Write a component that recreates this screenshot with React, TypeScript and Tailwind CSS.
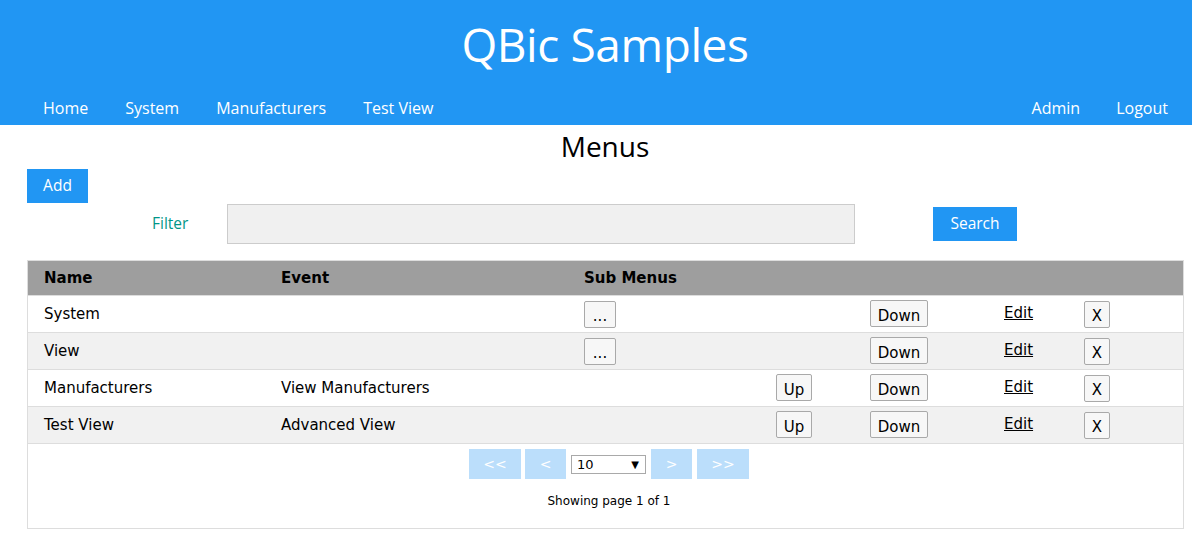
import { ReactNode } from 'react';

const navFont = { fontFamily: '"Open Sans", "Noto Sans", sans-serif' };

type Row = { name: string; event: string; sub: boolean; up: boolean; shade: boolean };

const rows: Row[] = [
  { name: 'System', event: '', sub: true, up: false, shade: false },
  { name: 'View', event: '', sub: true, up: false, shade: true },
  { name: 'Manufacturers', event: 'View Manufacturers', sub: false, up: true, shade: false },
  { name: 'Test View', event: 'Advanced View', sub: false, up: true, shade: true },
];

const cols = 'grid grid-cols-[237px_303px_192px_94px_134px_80px_1fr]';

function SmallButton({ children, className = '' }: { children: ReactNode; className?: string }) {
  return (
    <button
      className={`h-[27px] border border-[#a9a9a9] bg-[#f7f7f7] text-[15px] text-black leading-none rounded-[2px] ${className}`}
    >
      {children}
    </button>
  );
}

function PageButton({ children, className = '' }: { children: ReactNode; className?: string }) {
  return (
    <button className={`h-[30px] bg-[#bbdefb] text-white text-[14px] ${className}`}>{children}</button>
  );
}

export default function App() {
  return (
    <div className="w-[1192px] h-[540px] bg-white overflow-hidden" style={{ fontFamily: '"DejaVu Sans", Verdana, sans-serif' }}>
      <header className="bg-[#2196f3] h-[125px] flex flex-col text-white" style={navFont}>
        <h1 className="text-center text-[46px] leading-none pt-[21px] pl-[18px] h-[91px] font-normal tracking-[-0.4px]">QBic Samples</h1>
        <nav className="flex items-center pl-[25px] pr-[6px] text-[16px] h-[34px]">
          {['Home', 'System', 'Manufacturers', 'Test View'].map((item) => (
            <a key={item} className="px-[18px] mr-px">{item}</a>
          ))}
          <div className="flex-1" />
          {['Admin', 'Logout'].map((item) => (
            <a key={item} className="px-[18px]">{item}</a>
          ))}
        </nav>
      </header>

      <h2 className="text-center text-[28px] leading-none pt-[7px] pl-[18px] h-[44px] text-black" style={navFont}>Menus</h2>

      <div className="px-[27px]">
        <button className="bg-[#2196f3] text-white w-[61px] h-[34px] text-[15.5px]" style={navFont}>Add</button>
      </div>

      <div className="flex items-center h-[40px] mt-px" style={navFont}>
        <span className="w-[227px] pl-[152px] text-[#009688] text-[15.5px]">Filter</span>
        <input className="w-[628px] h-[40px] bg-[#f0f0f0] border border-[#cccccc] outline-none" />
        <button className="ml-[78px] bg-[#2196f3] text-white w-[84px] h-[34px] text-[15.5px]">Search</button>
      </div>

      <div className="mx-[27px] mt-[16px] border border-[#dddddd] w-[1157px] h-[269px]">
        <div className={`${cols} bg-[#9e9e9e] h-[35px] items-center font-bold text-[15px] text-black border-b border-[#dddddd] pt-px`}>
          <div className="pl-[16px]">Name</div>
          <div className="pl-[16px]">Event</div>
          <div className="pl-[16px]">Sub Menus</div>
        </div>
        {rows.map((r) => (
          <div
            key={r.name}
            className={`${cols} h-[37px] items-center text-[15px] text-black border-b border-[#dddddd] ${r.shade ? 'bg-[#f1f1f1]' : 'bg-white'}`}
          >
            <div className="pl-[16px]">{r.name}</div>
            <div className="pl-[16px]">{r.event}</div>
            <div className="pl-[16px]">{r.sub && <SmallButton className="w-[32px] text-[13px] pt-[4px]">...</SmallButton>}</div>
            <div className="pl-[16px]">{r.up && <SmallButton className="w-[36px] pt-[6px]">Up</SmallButton>}</div>
            <div className="pl-[16px]"><SmallButton className="w-[58px] pt-[6px]">Down</SmallButton></div>
            <div className="pl-[16px] -mt-[2px]"><a className="underline">Edit</a></div>
            <div className="pl-[16px] pt-px"><SmallButton className="w-[26px] pt-[4px]">X</SmallButton></div>
          </div>
        ))}
        <div className="flex flex-col items-center pt-[5px] pl-[7px]">
          <div className="flex items-center gap-[5px]">
            <PageButton className="w-[52px] mr-[-1px]">&lt;&lt;</PageButton>
            <PageButton className="w-[41px]">&lt;</PageButton>
            <div className="relative w-[75px] h-[19px] border border-[#a9a9a9] bg-white text-[13px] leading-[17px] pl-[5px]">
              10
              <span className="absolute right-[6px] top-0 text-[10px]">▼</span>
            </div>
            <PageButton className="w-[41px]">&gt;</PageButton>
            <PageButton className="w-[52px]">&gt;&gt;</PageButton>
          </div>
          <div className="text-[12px] text-black mt-[13px]">Showing page 1 of 1</div>
        </div>
      </div>
    </div>
  );
}
